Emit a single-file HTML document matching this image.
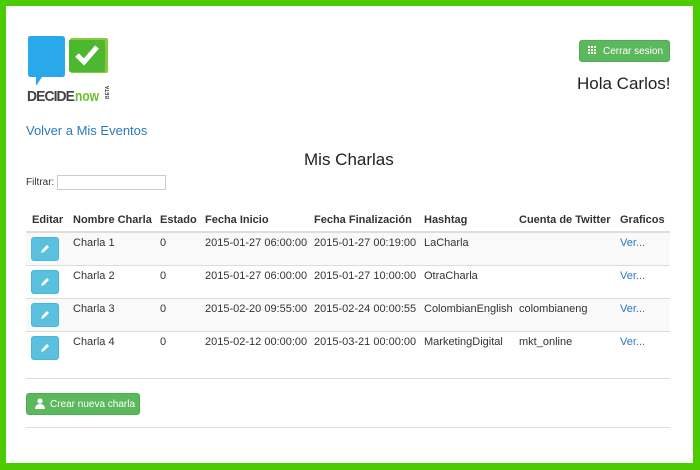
<!DOCTYPE html>
<html><head><meta charset="utf-8"><style>
*{margin:0;padding:0;box-sizing:border-box}
body{width:700px;height:470px;background:#4ccb00;font-family:"Liberation Sans",Arial,sans-serif;color:#333;position:relative;overflow:hidden}
.page{position:absolute;left:6px;top:6px;width:687px;height:457px;background:#fff}
.a{position:absolute;white-space:nowrap}
.th{font-weight:bold;font-size:11px;color:#333}
.td{font-size:11px;color:#333}
.line{position:absolute;left:26px;width:644px;height:1px;background:#ddd}
.stripe{position:absolute;left:26px;width:644px;height:32px;background:#f9f9f9}
.eb{position:absolute;left:31px;width:28px;height:24px;background:#5bc0de;border:1px solid #46b8da;border-radius:3px}
.lk{color:#2a7ac0}
</style></head><body>
<div class="page"></div>
<svg class="a" style="left:26px;top:34px" width="84" height="70" viewBox="0 0 84 70">
<path d="M4 2 H36 Q39 2 39 5 V40 Q39 43 36 43 H16 L10 52 V43 H5 Q2 43 2 40 V5 Q2 2 4 2Z" fill="#29a8eb"/>
<path d="M44 4 H80 Q82 4 82 6 V37 Q82 39 80 39 H46 Q44 39 44 37 V6 Q44 4 46 4Z" fill="#8dc63f"/>
<path d="M43 6 H77 Q79 6 79 8 V36 Q79 38 77 38 H45 Q43 38 43 36Z" fill="#4cb82f"/>
<path d="M51 21 L58 28 L71 13" stroke="#fff" stroke-width="5" fill="none"/>
<text x="1" y="67" font-family="Liberation Sans" font-weight="bold" font-size="15" fill="#444" letter-spacing="-1" textLength="47" lengthAdjust="spacingAndGlyphs">DECIDE</text>
<text x="49" y="67" font-family="Liberation Sans" font-weight="bold" font-size="15" fill="#6cbf2a" textLength="24" lengthAdjust="spacingAndGlyphs">now</text>
<text x="75" y="67" font-family="Liberation Sans" font-weight="bold" font-size="5" fill="#444" transform="rotate(-90 78 62)">BETA</text>
</svg>
<div class="a" style="left:579px;top:40px;width:91px;height:22px;background:#5cb85c;border:1px solid #4cae4c;border-radius:3px;color:#fff;font-size:10px;line-height:21px;padding-left:23px">Cerrar sesion</div>
<svg class="a" style="left:588px;top:46px" width="9" height="9"><g fill="#fff"><rect x="0" y="0" width="2" height="2"/><rect x="3" y="0" width="2" height="2"/><rect x="6" y="0" width="2" height="2"/><rect x="0" y="3" width="2" height="2"/><rect x="3" y="3" width="2" height="2"/><rect x="6" y="3" width="2" height="2"/><rect x="0" y="6" width="2" height="2"/><rect x="3" y="6" width="2" height="2"/><rect x="6" y="6" width="2" height="2"/></g></svg>
<div class="a" style="left:577px;top:74px;font-size:17px;color:#222">Hola Carlos!</div>
<div class="a lk" style="left:26px;top:123px;font-size:13px">Volver a Mis Eventos</div>
<div class="a" style="left:304px;top:150px;font-size:17px;color:#222">Mis Charlas</div>
<div class="a" style="left:26px;top:177px;font-size:10px;color:#333">Filtrar:</div>
<div class="a" style="left:57px;top:175px;width:109px;height:15px;border:1px solid #ccc"></div>

<div class="stripe" style="top:233px"></div>
<div class="stripe" style="top:299px"></div>
<div class="line" style="top:231px;height:2px"></div>
<div class="line" style="top:265px"></div>
<div class="line" style="top:298px"></div>
<div class="line" style="top:331px"></div>
<div class="line" style="top:378px"></div>
<div class="line" style="top:427px"></div>

<div class="a th" style="left:32px;top:214px">Editar</div>
<div class="a th" style="left:73px;top:214px">Nombre Charla</div>
<div class="a th" style="left:160px;top:214px">Estado</div>
<div class="a th" style="left:205px;top:214px">Fecha Inicio</div>
<div class="a th" style="left:314px;top:214px">Fecha Finalización</div>
<div class="a th" style="left:424px;top:214px">Hashtag</div>
<div class="a th" style="left:519px;top:214px">Cuenta de Twitter</div>
<div class="a th" style="left:620px;top:214px">Graficos</div>

<div class="eb" style="top:237px"></div><div class="eb" style="top:270px"></div><div class="eb" style="top:303px"></div><div class="eb" style="top:336px"></div>
<svg class="a" style="left:39px;top:243px" width="12" height="12"><path d="M2 10 L3 7 L8 2 L10 4 L5 9Z" fill="#fff"/></svg>
<svg class="a" style="left:39px;top:276px" width="12" height="12"><path d="M2 10 L3 7 L8 2 L10 4 L5 9Z" fill="#fff"/></svg>
<svg class="a" style="left:39px;top:309px" width="12" height="12"><path d="M2 10 L3 7 L8 2 L10 4 L5 9Z" fill="#fff"/></svg>
<svg class="a" style="left:39px;top:342px" width="12" height="12"><path d="M2 10 L3 7 L8 2 L10 4 L5 9Z" fill="#fff"/></svg>

<div class="a td" style="left:73px;top:237px">Charla 1</div><div class="a td" style="left:160px;top:237px">0</div><div class="a td" style="left:205px;top:237px">2015-01-27 06:00:00</div><div class="a td" style="left:314px;top:237px">2015-01-27 00:19:00</div><div class="a td" style="left:424px;top:237px">LaCharla</div><div class="a td lk" style="left:620px;top:237px">Ver...</div>
<div class="a td" style="left:73px;top:270px">Charla 2</div><div class="a td" style="left:160px;top:270px">0</div><div class="a td" style="left:205px;top:270px">2015-01-27 06:00:00</div><div class="a td" style="left:314px;top:270px">2015-01-27 10:00:00</div><div class="a td" style="left:424px;top:270px">OtraCharla</div><div class="a td lk" style="left:620px;top:270px">Ver...</div>
<div class="a td" style="left:73px;top:303px">Charla 3</div><div class="a td" style="left:160px;top:303px">0</div><div class="a td" style="left:205px;top:303px">2015-02-20 09:55:00</div><div class="a td" style="left:314px;top:303px">2015-02-24 00:00:55</div><div class="a td" style="left:424px;top:303px">ColombianEnglish</div><div class="a td" style="left:519px;top:303px">colombianeng</div><div class="a td lk" style="left:620px;top:303px">Ver...</div>
<div class="a td" style="left:73px;top:336px">Charla 4</div><div class="a td" style="left:160px;top:336px">0</div><div class="a td" style="left:205px;top:336px">2015-02-12 00:00:00</div><div class="a td" style="left:314px;top:336px">2015-03-21 00:00:00</div><div class="a td" style="left:424px;top:336px">MarketingDigital</div><div class="a td" style="left:519px;top:336px">mkt_online</div><div class="a td lk" style="left:620px;top:336px">Ver...</div>

<div class="a" style="left:26px;top:393px;width:114px;height:22px;background:#5cb85c;border:1px solid #4cae4c;border-radius:3px;color:#fff;font-size:10px;line-height:21px;padding-left:23px">Crear nueva charla</div>
<svg class="a" style="left:35px;top:398px" width="10" height="11"><circle cx="5" cy="3" r="2.6" fill="#fff"/><path d="M0 11 Q0 6 5 6 Q10 6 10 11Z" fill="#fff"/></svg>
</body></html>
